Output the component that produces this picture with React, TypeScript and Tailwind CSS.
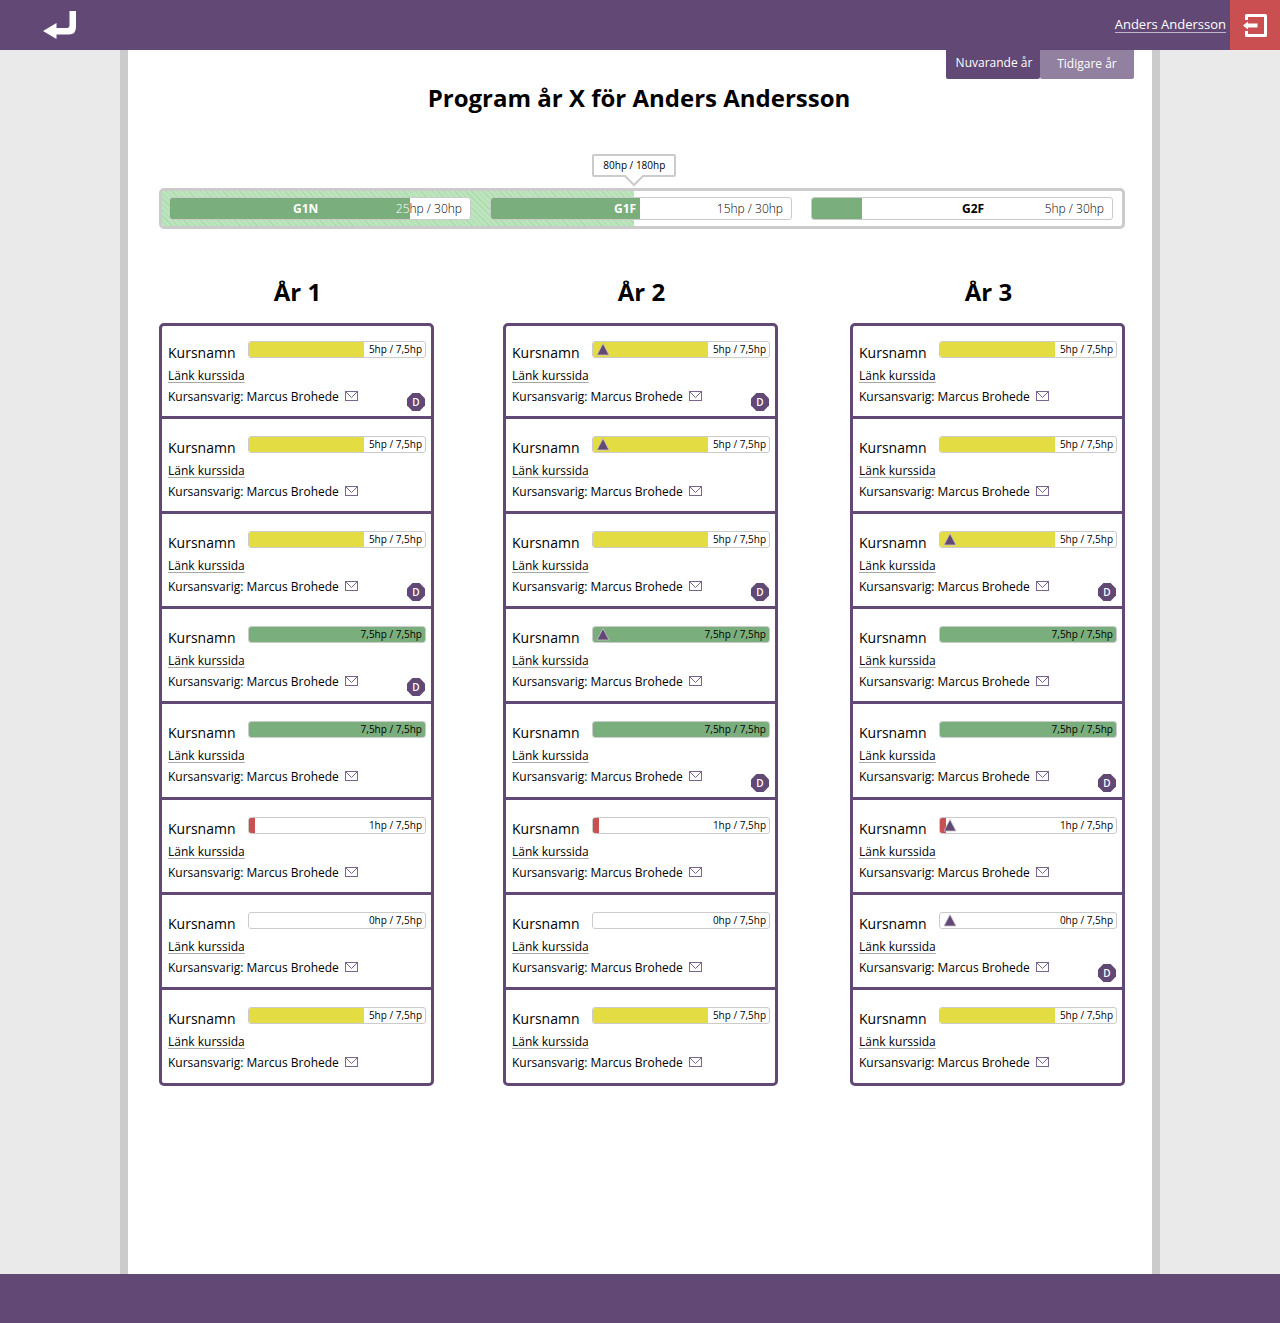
type Status = "yellow" | "green" | "red" | "empty";

type Course = { status: Status; marker?: boolean; badge?: boolean };

const statuses: Record<Status, { fill: string; percent: number; points: string }> = {
  yellow: { fill: "bg-[#e3dc42]", percent: 65.5, points: "5hp / 7,5hp" },
  green: { fill: "bg-[#7aae7c]", percent: 100, points: "7,5hp / 7,5hp" },
  red: { fill: "bg-[#c94f50]", percent: 3.5, points: "1hp / 7,5hp" },
  empty: { fill: "bg-white", percent: 0, points: "0hp / 7,5hp" },
};

const years: { title: string; courses: Course[] }[] = [
  {
    title: "År 1",
    courses: [
      { status: "yellow", badge: true },
      { status: "yellow" },
      { status: "yellow", badge: true },
      { status: "green", badge: true },
      { status: "green" },
      { status: "red" },
      { status: "empty" },
      { status: "yellow" },
    ],
  },
  {
    title: "År 2",
    courses: [
      { status: "yellow", marker: true, badge: true },
      { status: "yellow", marker: true },
      { status: "yellow", badge: true },
      { status: "green", marker: true },
      { status: "green", badge: true },
      { status: "red" },
      { status: "empty" },
      { status: "yellow" },
    ],
  },
  {
    title: "År 3",
    courses: [
      { status: "yellow" },
      { status: "yellow" },
      { status: "yellow", marker: true, badge: true },
      { status: "green" },
      { status: "green", badge: true },
      { status: "red", marker: true },
      { status: "empty", marker: true, badge: true },
      { status: "yellow" },
    ],
  },
];

const levels = [
  { name: "G1N", percent: 80, labelLeft: 41, onFill: true, lead: "25", rest: "hp / 30hp", leadOnFill: true },
  { name: "G1F", percent: 49.5, labelLeft: 41, onFill: true, lead: "15", rest: "hp / 30hp", leadOnFill: false },
  { name: "G2F", percent: 16.7, labelLeft: 50, onFill: false, lead: "5", rest: "hp / 30hp", leadOnFill: false },
];

function BackIcon() {
  return (
    <svg width="34" height="30" viewBox="0 0 34 30" fill="#fff" aria-hidden="true">
      <path d="M26.500 1H33V17Q33 24.500 26 24.500H13.500V29L0 21L13.500 13V18H24Q26.500 18 26.500 15Z" />
    </svg>
  );
}

function LogoutIcon() {
  return (
    <svg width="24" height="24" viewBox="0 0 24 24" aria-hidden="true">
      <path d="M3.500 7V2.500H22.500V22.500H3.500V18" fill="none" stroke="#fff" strokeWidth="3" strokeLinejoin="round" />
      <path d="M0 12.500L5 8.500V10.500H14.500V14.500H5V16.500Z" fill="#fff" />
    </svg>
  );
}

function MailIcon() {
  return (
    <svg width="13" height="10" viewBox="0 0 13 10" fill="none" stroke="#7a6490" aria-hidden="true">
      <rect x="0.500" y="0.500" width="12" height="9" />
      <path d="M1 1L6.500 6.500L12 1" />
    </svg>
  );
}

function Marker() {
  return (
    <svg className="absolute left-[3px] top-0" width="14" height="14" viewBox="0 0 14 14" aria-hidden="true">
      <path d="M7 1.500L13 13H1Z" fill="#624975" stroke="#c9c2cf" strokeWidth="0.800" strokeLinejoin="round" />
    </svg>
  );
}

function Badge() {
  return (
    <span className="absolute right-1.5 bottom-[5px] grid size-[18px] place-items-center bg-[#624975] pb-px text-[10px] leading-none font-semibold text-white [clip-path:polygon(30%_0,70%_0,100%_30%,100%_70%,70%_100%,30%_100%,0_70%,0_30%)]">
      D
    </span>
  );
}

function CourseRow({ status, marker, badge }: Course) {
  const { fill, percent, points } = statuses[status];
  return (
    <li className="relative min-h-[95px] border-b-3 border-[#624975] pt-[17px] pr-[5px] pl-1.5 first:min-h-[93px] first:pt-[15px] last:min-h-[92px] last:border-b-0 nth-[3n+5]:grow">
      <div className="flex items-start justify-between">
        <h3 className="pt-0.5 text-[14px] leading-5">Kursnamn</h3>
        <div className="relative h-[17px] w-[178px] overflow-hidden rounded-[3px] border border-[#cbcbcb] bg-white">
          <div className={`h-full ${fill}`} style={{ width: `${percent}%` }} />
          {marker && <Marker />}
          <span className="absolute inset-y-0 right-[3px] text-[10px] leading-[15px]">{points}</span>
        </div>
      </div>
      <div className="pt-0.5 text-[12px] leading-[21px]">
        <a href="#kurssida" className="underline decoration-[#a8a8a8] decoration-1 underline-offset-2">
          Länk kurssida
        </a>
        <p className="flex items-center gap-1.5">
          Kursansvarig: Marcus Brohede
          <a href="#mail" aria-label="Mejla Marcus Brohede" className="pb-0.5">
            <MailIcon />
          </a>
        </p>
      </div>
      {badge && <Badge />}
    </li>
  );
}

export default function App() {
  return (
    <div className="flex min-h-screen flex-col bg-[#eaeaea] font-['Open_Sans',sans-serif] text-black">
      <header className="flex h-[50px] items-center justify-between bg-[#624975]">
        <button type="button" aria-label="Tillbaka" className="ml-[43px]">
          <BackIcon />
        </button>
        <div className="flex h-full items-center gap-1">
          <a href="#profil" className="border-b border-[#c0b6c8] text-[13px] leading-[15px] text-white">
            Anders Andersson
          </a>
          <button type="button" aria-label="Logga ut" className="grid h-full w-[50px] place-items-center bg-[#c94f50]">
            <LogoutIcon />
          </button>
        </div>
      </header>

      <main className="mx-auto w-full max-w-[1040px] grow border-x-8 border-[#cbcbcb] bg-white pb-[188px]">
        <nav className="flex justify-end pr-[18px] text-[12px] text-white">
          <button type="button" className="h-[29px] w-[94px] rounded-b-xs bg-[#624975] pb-1 pl-0.5">
            Nuvarande år
          </button>
          <button type="button" className="h-[29px] w-[94px] rounded-b-xs bg-[#9280a0] pb-0.5">
            Tidigare år
          </button>
        </nav>

        <div className="pr-[27px] pl-[31px]">
          <h1 className="pt-[3px] pr-1.5 text-center text-[24px] leading-8 font-bold">
            Program år X för Anders Andersson
          </h1>

          <section className="relative mt-[74px] rounded-[5px] border-3 border-[#cbcbcb]">
            <div
              className="absolute inset-y-0 left-0 bg-[repeating-linear-gradient(45deg,#bde5bd_0px,#bde5bd_3px,#addbae_3px,#addbae_4px)]"
              style={{ width: "49.2%" }}
            />
            <div
              className="absolute bottom-full mb-[14px] h-[23px] w-[84px] -translate-x-1/2 rounded-xs border-2 border-[#cbcbcb] bg-white text-center text-[10px] leading-[19px]"
              style={{ left: "49.2%" }}
            >
              80hp / 180hp
              <svg className="absolute top-[19px] left-[29px]" width="22" height="12" viewBox="0 0 22 12" aria-hidden="true">
                <path d="M1 0L11 9.500L21 0Z" fill="#fff" />
                <path d="M0 1H2L11 10L20 1H22" fill="none" stroke="#cbcbcb" strokeWidth="2" />
              </svg>
            </div>
            <div className="relative grid grid-cols-3 gap-[19px] py-1.5 pr-[9px] pl-[7px]">
              {levels.map((level) => (
                <div
                  key={level.name}
                  className="relative h-[23px] overflow-hidden rounded-[3px] border border-[#cbcbcb] bg-white text-[12px] leading-[21px]"
                >
                  <div className="h-full bg-[#7aae7c]" style={{ width: `${level.percent}%` }} />
                  <span
                    className={`absolute inset-y-0 font-bold ${level.onFill ? "text-white" : "text-black"}`}
                    style={{ left: `${level.labelLeft}%` }}
                  >
                    {level.name}
                  </span>
                  <span className="absolute inset-y-0 right-2 font-light">
                    <span className={level.leadOnFill ? "text-white" : "text-black"}>{level.lead}</span>
                    {level.rest}
                  </span>
                </div>
              ))}
            </div>
          </section>

          <div className="mt-[47px] flex flex-wrap gap-[69px]">
            {years.map((year) => (
              <section key={year.title} className="w-[275px] last:ml-auto">
                <h2 className="pl-0.5 text-center text-[24px] leading-8 font-bold">{year.title}</h2>
                <ul className="mt-[15px] flex min-h-[763px] flex-col rounded-[5px] border-3 border-[#624975]">
                  {year.courses.map((course, index) => (
                    <CourseRow key={index} {...course} />
                  ))}
                </ul>
              </section>
            ))}
          </div>
        </div>
      </main>

      <footer className="h-[49px] bg-[#624975]" />
    </div>
  );
}
